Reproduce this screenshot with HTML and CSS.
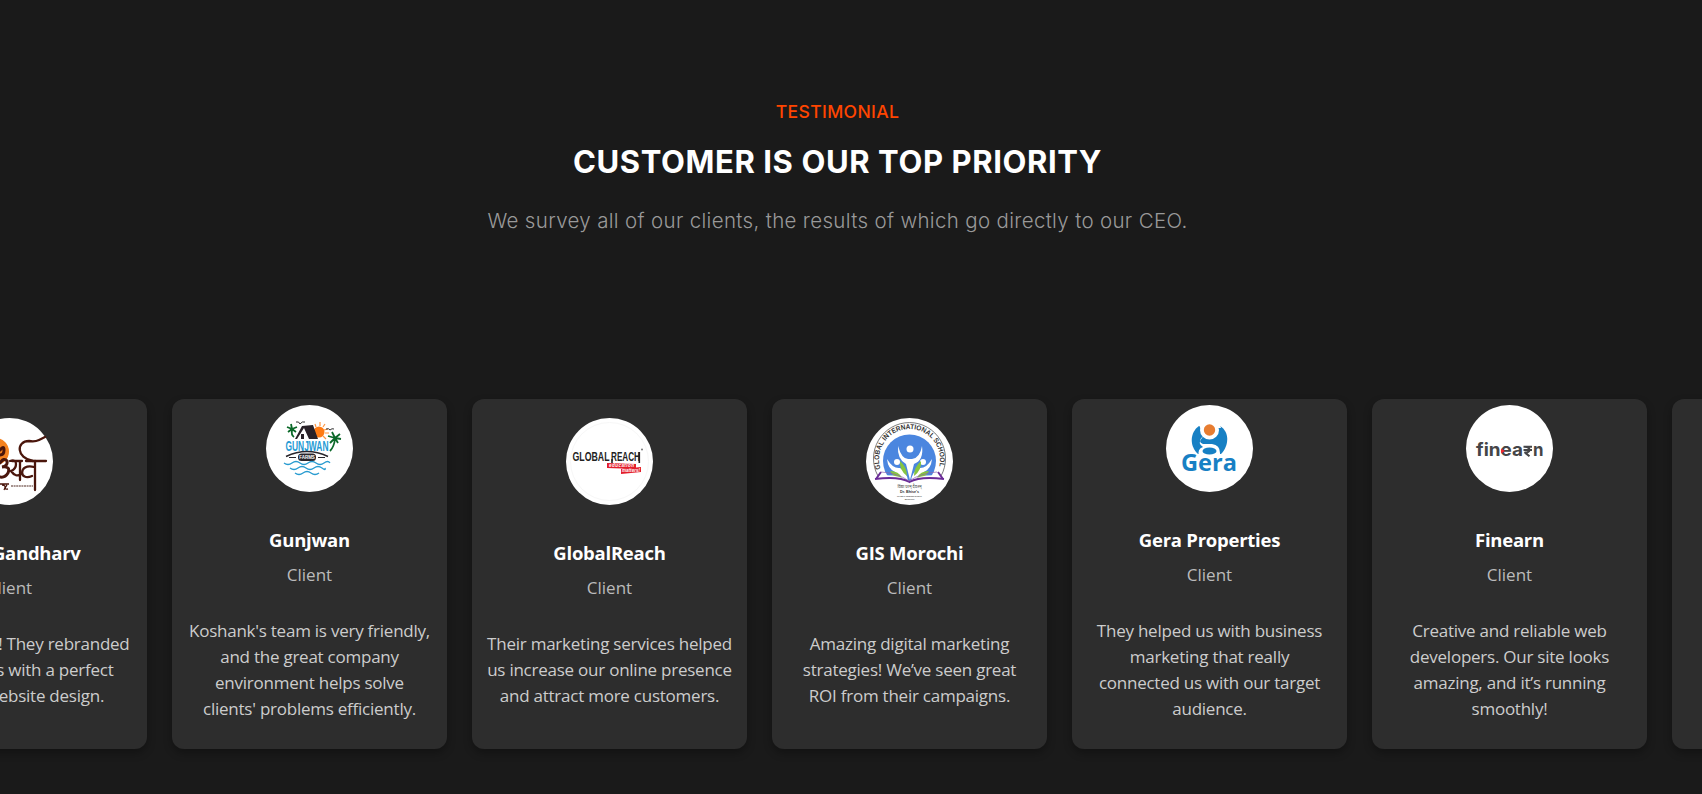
FILE: index.html
```html
<!DOCTYPE html>
<html lang="en">
<head>
<meta charset="utf-8">
<title>Testimonials</title>
<link rel="stylesheet" href="styles.css">
</head>
<body>
<section class="testimonials">
  <header class="intro">
    <p class="eyebrow">TESTIMONIAL</p>
    <h2 class="headline">CUSTOMER IS OUR TOP PRIORITY</h2>
    <p class="lead">We survey all of our clients, the results of which go directly to our CEO.</p>
  </header>
  <div class="track">
    <article class="card">
      <svg class="logo" viewBox="0 0 87 87">
        <circle cx="43.5" cy="43.5" r="43.5" fill="#fff"/>
        <circle cx="29.500" cy="33.500" r="13.500" fill="#f58220"/>
        <g fill="none" stroke="#4a160c" stroke-width="2.300" stroke-linecap="round">
          <path d="M34 32q4-5 4 0t-4 5M34 45q4-6 7-2 1 5-5 6 9-1 6 6-3 5-8 4" stroke-width="3"/>
          <path d="M44 43q6-2 6 3t-5 7q5 7 10 3M46 43h10M54 43v19M60 43h20"/>
          <path d="M69 43v29M68 49c-16-4-15 15-2 9M67 43C50 40 50 23 63 23q6 1 10-1l6-3" />
        </g>
        <path d="M34 66h9M36 67q5 0 2 5M41 67q-4 5 1 4" fill="none" stroke="#4a160c" stroke-width="1.300"/>
        <path d="M45 68h22" stroke="#8b716b" stroke-width="1.300" stroke-dasharray="2 .6"/>
      </svg>
      <h3 class="name">Hotel Gandharv</h3>
      <p class="role">Client</p>
      <p class="quote"><span>Amazing work! They rebranded</span><span>our business with a perfect</span><span>logo and website design.</span></p>
    </article>
    <article class="card">
      <svg class="logo" viewBox="0 0 87 87">
        <circle cx="43.5" cy="43.5" r="43.5" fill="#fff"/>
        <circle cx="53" cy="27" r="5.5" fill="#ff7a12"/>
        <path d="M49 19l1 3M54 17v4M59 19l-2 3M62 24l-4 1M63 28h-4M60 34l-3-3" stroke="#ff9540" stroke-width="1.2"/>
        <path d="M29 34l7-13 11-1 5 14H43l-5-11-7 11z" fill="#292128"/>
        <path d="M43 24v-3h2v4M35 29h3v5h-3z" fill="#292128"/>
        <path d="M30 17q3-1 4 2 2-3 5-2M60 24q3-1 4 1 2-2 4-1" fill="none" stroke="#333" stroke-width="1"/>
        <g fill="none" stroke="#0b6929" stroke-width="1.800"><path d="M26 24l-5-2m5 2l-4 3m4-3l-1-5m1 5l5-2m-5 2l4 3M26 25q-1 5 2 7M69 33l-7-2m7 2l-5 5m5-5l-3-6m3 6l5-4m-5 4l6 1m-6-1l3 5M69 34q-1 8-5 12"/></g>
        <text class="gunjwan-word" x="19.500" y="46" textLength="43" lengthAdjust="spacingAndGlyphs">GUNJWAN</text>
        <path d="M20 51.500Q41 41.500 62 51.500" fill="none" stroke="#29252b" stroke-width="1.4"/>
        <rect x="32" y="48.500" width="18" height="7.500" rx="3.5" fill="#29252b"/>
        <text class="farms-word" x="41" y="53.800">FARMS</text>
        <path d="M23 52.500h7M52 52.500h7" stroke="#29252b"/>
        <path d="M18 58q4 3 8 0t8 0 8 0 8 0 8 0 6 0M24 63q4 3 8 0t8 0 8 0 8 0 3 0M29 68q4 3 8 0t8 0 8 0" fill="none" stroke="#289bd0" stroke-width="1.3"/>
      </svg>
      <h3 class="name">Gunjwan</h3>
      <p class="role">Client</p>
      <p class="quote"><span>Koshank's team is very friendly,</span><span>and the great company</span><span>environment helps solve</span><span>clients' problems efficiently.</span></p>
    </article>
    <article class="card">
      <svg class="logo" viewBox="0 0 87 87">
        <circle cx="43.5" cy="43.5" r="43.5" fill="#fff"/>
        <circle cx="43.5" cy="43.5" r="39" fill="none" stroke="#f7f7f7"/>
        <text class="reach-word" x="6.500" y="42.500" textLength="37" lengthAdjust="spacingAndGlyphs">GLOBAL</text>
        <text class="reach-word" x="45" y="42.500" textLength="29" lengthAdjust="spacingAndGlyphs">REACH</text>
        <path d="M73.300 34v11M46 41v4" stroke="#222" stroke-width="1.6"/>
        <circle cx="76" cy="31.500" r="1" fill="#777"/>
        <path d="M41 45l29 1v5l-29-1zM55 51l20-2v5l-20 2z" fill="#e31e2b"/>
        <text class="reach-tag" x="43" y="49.300" textLength="25">education</text>
        <text class="reach-tag" x="56" y="54.300" textLength="18">matters!</text>
      </svg>
      <h3 class="name">GlobalReach</h3>
      <p class="role">Client</p>
      <p class="quote"><span>Their marketing services helped</span><span>us increase our online presence</span><span>and attract more customers.</span></p>
    </article>
    <article class="card">
      <svg class="logo" viewBox="0 0 87 87">
        <defs><path id="school-arc" d="M14.500 51A30.500 30.500 0 1 1 72.500 51"/></defs>
        <circle cx="43.5" cy="43.5" r="43.5" fill="#fff"/>
        <path d="M12 58A36 36 0 1 1 75 58" fill="none" stroke="#444" stroke-width=".7"/>
        <circle cx="43.500" cy="43" r="26.500" fill="#4b86df"/>
        <text class="school-name"><textPath href="#school-arc" textLength="112" lengthAdjust="spacingAndGlyphs">GLOBAL INTERNATIONAL SCHOOL</textPath></text>
        <g fill="#fff"><circle cx="44" cy="31" r="3.500"/><circle cx="31" cy="44" r="3"/><circle cx="57" cy="44" r="3"/>
        <path d="M32 28q4 14 11 13h3q8-1 10-13 2 14-8 18l-4 16-4-16q-9-5-8-18zM21 41q6 10 13 9 7 4 8 13-10 0-13-9-7-3-8-13zM66 41q-6 10-13 9-7 4-8 13 10 0 13-9 7-3 8-13z"/></g>
        <path d="M34 43q7 6 7 15-8-6-7-15zM55 43q-7 6-7 15 8-6 7-15zM24 53q9 0 12 7-8 1-12-7zM63 53q-9 0-12 7 8 1 12-7z" fill="#86c540"/>
        <path d="M11 58q18-3 32.500 5Q58 55 76 58l-1 3q-4 0-9 1-10 10-22 10T21 62l-10-1z" fill="#fff"/>
        <path d="M10 61l5-7M77 61l-5-7M9 61q24-3 34.500 3Q54 58 78 61" fill="none" stroke="#6b2c98" stroke-width="2"/>
        <path d="M15 54q17 1 28 9 12-8 28-9" fill="none" stroke="#8b63ad" stroke-width=".7"/>
        <text class="school-hindi" x="43.5" y="70">विद्या परम् दैवतम्</text>
        <text class="school-small" x="43.5" y="75">Dr. Bhise's</text>
        <text class="school-tiny" x="43.5" y="78.500">GLOBAL INTERNATIONAL</text>
        <text class="school-tiny" x="43.5" y="82">MOROCHI</text>
      </svg>
      <h3 class="name">GIS Morochi</h3>
      <p class="role">Client</p>
      <p class="quote"><span>Amazing digital marketing</span><span>strategies! We’ve seen great</span><span>ROI from their campaigns.</span></p>
    </article>
    <article class="card">
      <svg class="logo" viewBox="0 0 87 87">
        <circle cx="43.5" cy="43.5" r="43.5" fill="#fff"/>
        <path d="M33 21C24 27 23 41 32 49h23c8-8 9-22-1-28z" fill="#1780c4"/>
        <circle cx="43.500" cy="25" r="9.500" fill="#fff"/>
        <path d="M33 20h21l1 3h-4v4H36zM37 31q-6 6 0 8h9q8 1 8 9v3H33q-2-7 4-9-6-4-1-9z" fill="#fff"/>
        <path d="M39 35q-2 2 1 2h6q4-1 5-4-5 4-12 2z" fill="#1780c4"/>
        <circle cx="43.500" cy="25" r="5.700" fill="#e77d31"/>
        <ellipse cx="43.500" cy="46" rx="7" ry="3.600" fill="#1780c4"/>
        <text class="gera-word" x="15" y="66" textLength="56" lengthAdjust="spacingAndGlyphs">Gera</text>
      </svg>
      <h3 class="name">Gera Properties</h3>
      <p class="role">Client</p>
      <p class="quote"><span>They helped us with business</span><span>marketing that really</span><span>connected us with our target</span><span>audience.</span></p>
    </article>
    <article class="card">
      <svg class="logo" viewBox="0 0 87 87">
        <circle cx="43.5" cy="43.5" r="43.5" fill="#fff"/>
        <text class="fin-word" x="10" y="51" textLength="47" lengthAdjust="spacingAndGlyphs">finea</text>
        <path d="M57.500 41.800h8.500M57.500 45h8.500M58.500 41.800q6 0 4.500 4.500-2 2-4.500 1l5 4" fill="none" stroke="#454547" stroke-width="2.100"/>
        <text class="fin-word" x="67" y="51" textLength="10.500" lengthAdjust="spacingAndGlyphs">n</text>
        <path d="M35 43.500l4 2.500-4 2.500z" fill="#f02832"/>
      </svg>
      <h3 class="name">Finearn</h3>
      <p class="role">Client</p>
      <p class="quote"><span>Creative and reliable web</span><span>developers. Our site looks</span><span>amazing, and it’s running</span><span>smoothly!</span></p>
    </article>
    <article class="card"></article>
  </div>
</section>
</body>
</html>
```
FILE: styles.css
```css
* { box-sizing: border-box; }
body { margin: 0; background: #1a1a1a; }
h2, h3, p { margin: 0; }
.testimonials { height: 794px; overflow: hidden; font-family: "Open Sans", "Noto Sans", sans-serif; }
.intro { width: 1675px; height: 399px; padding-top: 98px; text-align: center; font-family: Inter, "Open Sans", sans-serif; white-space: nowrap; }
.eyebrow { color: #ff4500; font-size: 17.6px; line-height: 28px; font-weight: 500; letter-spacing: .35px; }
.headline { margin-top: 17px; color: #fff; font-size: 31px; line-height: 38px; font-weight: 700; letter-spacing: .6px; }
.lead { margin-top: 24px; color: #999; font-size: 20.5px; line-height: 32px; font-weight: 300; letter-spacing: .33px; }
.track { display: flex; gap: 25px; margin-left: -128px; }
.card { flex: none; width: 275px; height: 350px; padding: 0 10px; display: flex; flex-direction: column; align-items: center; justify-content: center; border-radius: 12px; background: #2d2d2d; box-shadow: 0 4px 8px rgba(0, 0, 0, .3); text-align: center; }
.logo { flex: none; display: block; width: 87px; height: 87px; }
.name { margin-top: 35px; color: #fff; font-size: 18.5px; line-height: 26px; font-weight: 700; letter-spacing: -.25px; white-space: nowrap; }
.role { margin-top: 9px; color: #bbb; font-size: 17px; line-height: 26px; }
.quote { margin: 30px 0 21px; color: #ccc; font-size: 17px; line-height: 26px; letter-spacing: -.24px; white-space: nowrap; }
.quote span { display: block; }
.gunjwan-word { font: 700 14px "Liberation Sans", sans-serif; fill: #269ad4; }
.farms-word { font: 700 4.5px "Liberation Sans", sans-serif; fill: #fff; text-anchor: middle; }
.reach-word { font: 600 13px "Liberation Sans", sans-serif; fill: #222; }
.reach-tag { font: italic 700 4.5px "Liberation Sans", sans-serif; fill: #fff; }
.school-name { font: 700 7px "Liberation Sans", sans-serif; fill: #333; }
.school-hindi { font: 4px "Noto Sans", sans-serif; fill: #444; text-anchor: middle; }
.school-small { font: 700 3.7px "Liberation Sans", sans-serif; fill: #333; text-anchor: middle; }
.school-tiny { font: 700 2px "Liberation Sans", sans-serif; fill: #444; text-anchor: middle; }
.gera-word { font: 700 23px "Open Sans", sans-serif; fill: #1780c4; }
.fin-word { font: 700 18px Inter, sans-serif; fill: #454547; }
```
